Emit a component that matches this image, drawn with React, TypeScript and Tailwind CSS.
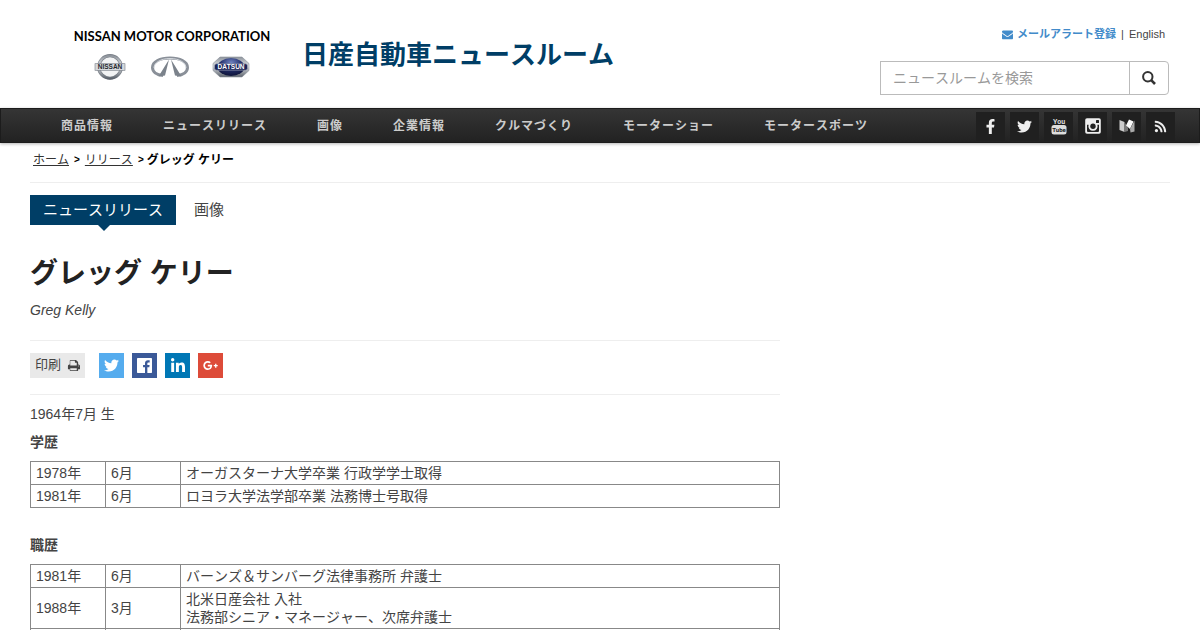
import type { ReactNode } from "react";
import { FaFacebookF, FaTwitter, FaLinkedinIn, FaRss, FaGooglePlusG } from "react-icons/fa";

const navItems = ["商品情報", "ニュースリリース", "画像", "企業情報", "クルマづくり", "モーターショー", "モータースポーツ"];

type Row = { year: string; month: string; lines: string[] };

const education: Row[] = [
  { year: "1978年", month: "6月", lines: ["オーガスターナ大学卒業 行政学学士取得"] },
  { year: "1981年", month: "6月", lines: ["ロヨラ大学法学部卒業 法務博士号取得"] },
];

const career: Row[] = [
  { year: "1981年", month: "6月", lines: ["バーンズ＆サンバーグ法律事務所 弁護士"] },
  { year: "1988年", month: "3月", lines: ["北米日産会社 入社", "法務部シニア・マネージャー、次席弁護士"] },
  { year: "", month: "", lines: [""] },
];

function EnvelopeIcon() {
  return (
    <svg viewBox="0 0 1792 1792" className="size-[11px] fill-current" aria-hidden="true">
      <path d="M1792 710v794q0 66-47 113t-113 47h-1472q-66 0-113-47t-47-113v-794q44 49 101 87 362 246 497 345 57 42 92.5 65.5t94.5 48 110 24.5h2q51 0 110-24.5t94.5-48 92.5-65.5q170-123 498-345 57-39 100-87zM1792 416q0 79-49 151t-122 123q-376 261-468 325-10 7-42.5 31t-54 38.5-52 32.5-57.5 27-50 9h-2q-23 0-50-9t-57.5-27-52-32.5-54-38.5-42.5-31q-91-64-262-182.5t-205-142.5q-62-42-117-115.5t-55-136.5q0-78 41.5-130t118.5-52h1472q65 0 112.5 47t47.5 113z" />
    </svg>
  );
}

function PrintIcon() {
  return (
    <svg viewBox="0 0 1792 1792" className="size-[13px] fill-current" aria-hidden="true">
      <path d="M448 1536h896v-256h-896v256zM448 896h896v-384h-160q-40 0-68-28t-28-68v-160h-640v640zM1664 960q0-26-19-45t-45-19-45 19-19 45 19 45 45 19 45-19 19-45zM1792 960v416q0 13-9.5 22.5t-22.5 9.5h-224v160q0 40-28 68t-68 28h-960q-40 0-68-28t-28-68v-160h-224q-13 0-22.5-9.5t-9.5-22.5v-416q0-79 56.5-135.5t135.5-56.5h64v-544q0-40 28-68t68-28h672q40 0 88 20t76 48l152 152q28 28 48 76t20 88v256h64q79 0 135.5 56.5t56.5 135.5z" />
    </svg>
  );
}

function FacebookTileIcon() {
  return (
    <svg viewBox="128 128 1536 1536" className="size-[15px] fill-current" aria-hidden="true">
      <path d="M1579 128q35 0 60 25t25 60v1366q0 35-25 60t-60 25h-391v-595h199l30-232h-229v-148q0-56 23.5-84t91.5-28l122-1v-207q-63-9-178-9-136 0-217.5 80t-81.5 226v171h-200v232h200v595h-735q-35 0-60-25t-25-60v-1366q0-35 25-60t60-25h1366z" />
    </svg>
  );
}

function SearchIcon() {
  return (
    <svg viewBox="0 0 14 14" className="size-[14px]" fill="none" stroke="#333" aria-hidden="true">
      <circle cx="5.8" cy="5.8" r="4.7" strokeWidth="2" />
      <path d="M9.2 9.2L13 13" strokeWidth="2.6" />
    </svg>
  );
}

function YoutubeIcon() {
  return (
    <svg viewBox="0 0 18 20" className="h-5 w-[18px]" aria-hidden="true">
      <text x="9" y="8" textAnchor="middle" fontSize="7" fontWeight="700" fontFamily="Roboto, sans-serif" fill="#ddd">You</text>
      <rect x="1.5" y="9" width="15" height="9.5" rx="2.5" fill="#ddd" />
      <text x="9" y="16" textAnchor="middle" fontSize="6" fontWeight="700" fontFamily="Roboto, sans-serif" fill="#222">Tube</text>
    </svg>
  );
}

function InstagramIcon() {
  return (
    <svg viewBox="0 0 16 16" className="size-4" aria-hidden="true">
      <rect x="0.2" y="0.2" width="15.6" height="15.6" rx="1.8" fill="#eee" />
      <path d="M2 6.8h1.6a4.6 4.6 0 1 0 8.8 0H14V13a1 1 0 0 1-1 1H3a1 1 0 0 1-1-1z" fill="#222" />
      <circle cx="8" cy="8.2" r="3.9" fill="#eee" />
      <circle cx="8" cy="8.2" r="2.7" fill="#222" />
      <rect x="11" y="2" width="3" height="3" rx="0.5" fill="#222" />
    </svg>
  );
}

function MediumIcon() {
  return (
    <svg viewBox="0 0 16 14" className="h-[14px] w-4" aria-hidden="true">
      <path d="M0.5 1L5.500 3v10L0.500 11z" fill="#ccc" />
      <path d="M5.500 3L9 9L9 12L5.500 13z" fill="#777" />
      <path d="M10 0.500L14.500 2.500L11 10L7 6.500z" fill="#fafafa" />
      <path d="M11 10L15.500 1.500V12.500L11.500 13.500z" fill="#aaa" />
    </svg>
  );
}

function BrandLogos() {
  return (
    <svg viewBox="0 0 160 28" className="h-7 w-40" aria-hidden="true">
      <defs>
        <linearGradient id="chrome" x1="0" y1="0" x2="0" y2="1">
          <stop offset="0" stopColor="#8d939b" />
          <stop offset="0.45" stopColor="#dfe2e6" />
          <stop offset="1" stopColor="#5d646d" />
        </linearGradient>
        <radialGradient id="navy" cx="0.5" cy="0.25" r="0.7">
          <stop offset="0" stopColor="#7083c0" />
          <stop offset="0.6" stopColor="#1f2a66" />
          <stop offset="1" stopColor="#11173f" />
        </radialGradient>
      </defs>
      <circle cx="18" cy="14" r="11.3" fill="#f2f3f4" stroke="#777d85" strokeWidth="3.2" />
      <circle cx="18" cy="14" r="11.3" fill="none" stroke="url(#chrome)" strokeWidth="2" />
      <rect x="3" y="10.7" width="30" height="6.6" fill="#d5d8dc" stroke="#777d85" strokeWidth="0.6" />
      <text x="18" y="16.3" textAnchor="middle" fontSize="6.5" fontWeight="700" fontFamily="Liberation Sans, sans-serif" fill="#25282d">NISSAN</text>
      <path d="M71 22.500C64 22 60.500 18.500 60.500 14.500C60.500 8.500 68 5 78 5S95.500 8.500 95.500 14.500C95.500 18.500 92 22 85 22.500" fill="none" stroke="#8a9099" strokeWidth="3" />
      <path d="M62 15C62 9.500 69 5.500 78 5.500S94 9.500 94 15" fill="none" stroke="#d4d8dd" strokeWidth="1" />
      <path d="M66.500 23.500L77 6.500L73 22.500zM89.500 23.500L79 6.500L83 22.500z" fill="#7b828b" />
      <path d="M128 4h22l7 6.500v7L150 24h-22l-7-6.500v-7z" fill="url(#chrome)" stroke="#8a909a" strokeWidth="0.6" />
      <ellipse cx="139" cy="14" rx="13.5" ry="9" fill="url(#navy)" />
      <rect x="122.500" y="10.800" width="33" height="6.400" rx="2" fill="#1b2358" stroke="#a9aebb" strokeWidth="0.6" />
      <text x="139" y="16.4" textAnchor="middle" fontSize="6.5" fontWeight="700" fontFamily="Liberation Sans, sans-serif" fill="#fff">DATSUN</text>
    </svg>
  );
}

const channels: { label: string; icon: ReactNode }[] = [
  { label: "Facebook", icon: <FaFacebookF className="size-[15px]" /> },
  { label: "Twitter", icon: <FaTwitter className="size-[15px]" /> },
  { label: "YouTube", icon: <YoutubeIcon /> },
  { label: "Instagram", icon: <InstagramIcon /> },
  { label: "Medium", icon: <MediumIcon /> },
  { label: "RSS", icon: <FaRss className="size-[13px]" /> },
];

function HistoryTable({ label, rows }: { label: string; rows: Row[] }) {
  return (
    <table aria-label={label} className="w-full table-fixed border-collapse leading-[18px]">
      <colgroup>
        <col className="w-[75px]" />
        <col className="w-[75px]" />
        <col />
      </colgroup>
      <tbody>
        {rows.map((row, i) => (
          <tr key={i}>
            <td className="border border-[#888] px-[5px] py-[2px]">{row.year}</td>
            <td className="border border-[#888] px-[5px] py-[2px]">{row.month}</td>
            <td className="border border-[#888] px-[5px] py-[2px]">
              {row.lines.map((line, j) => (
                <div key={j} className="min-h-[18px]">{line}</div>
              ))}
            </td>
          </tr>
        ))}
      </tbody>
    </table>
  );
}

export default function App() {
  return (
    <div className="bg-white font-['Liberation_Sans','Noto_Sans_CJK_JP',sans-serif] text-sm text-[#444] [font-kerning:none]">
      <header className="flex h-[108px] items-start justify-between pr-[31px] pl-[75px]">
        <div className="flex">
          <a href="#" className="flex w-[194px] flex-col items-center pt-[27px] text-black">
            <span className="font-[Lato,sans-serif] text-[13px] leading-[18px] font-bold whitespace-nowrap [font-kerning:normal]">NISSAN MOTOR CORPORATION</span>
            <span className="mt-2"><BrandLogos /></span>
          </a>
          <a href="#" className="ml-[33px] pt-9 text-[26px] leading-[38px] font-bold text-[#003e66]">日産自動車ニュースルーム</a>
        </div>
        <div className="flex flex-col items-end pt-[26px]">
          <div className="flex items-center gap-[5px] pr-1 text-[11px] leading-4">
            <a href="#" className="flex items-center gap-1 font-bold text-[#428bca]">
              <EnvelopeIcon />
              メールアラート登録
            </a>
            <span>|</span>
            <a href="#">English</a>
          </div>
          <form className="mt-[19px] flex h-[34px]" onSubmit={(e) => e.preventDefault()}>
            <input
              type="text"
              aria-label="ニュースルームを検索"
              placeholder="ニュースルームを検索"
              className="w-[250px] border border-[#bbb] px-3 placeholder:text-[#999]"
            />
            <button type="submit" aria-label="検索" className="-ml-px flex w-10 items-center justify-center rounded-r border border-[#bbb]">
              <SearchIcon />
            </button>
          </form>
        </div>
      </header>

      <nav className="flex h-[35px] items-center justify-between border border-[#1c1c1c] bg-linear-to-b from-[#353535] to-[#222] pt-px pr-6 pl-[60px] shadow-[0_1px_3px_rgba(0,0,0,0.3)]">
        <ul className="flex gap-[50px] text-xs font-bold tracking-[1px] text-[#ccc]">
          {navItems.map((item) => (
            <li key={item}><a href="#">{item}</a></li>
          ))}
        </ul>
        <ul className="flex gap-[5px] text-[#eee]">
          {channels.map((c) => (
            <li key={c.label}>
              <a href="#" aria-label={c.label} className="flex size-[29px] items-center justify-center bg-[#202020]">{c.icon}</a>
            </li>
          ))}
        </ul>
      </nav>

      <div className="px-[30px]">
        <div className="flex h-10 items-start gap-[5px] border-b border-[#eee] px-[3px] pt-2 text-xs leading-[18px] font-bold text-black">
          <a href="#" className="font-normal text-[#333] underline">ホーム</a>
          <span className="text-[10px]">&gt;</span>
          <a href="#" className="font-normal text-[#333] underline">リリース</a>
          <span className="text-[10px]">&gt;</span>
          <span className="-ml-[2px]">グレッグ ケリー</span>
        </div>

        <div className="mt-3 flex text-[15px] leading-[30px]">
          <a href="#" className="relative bg-[#003e66] px-[13px] text-white">
            ニュースリリース
            <span className="absolute top-full left-1/2 -ml-[5px] border-x-6 border-t-6 border-x-transparent border-t-[#003e66]" />
          </a>
          <a href="#" className="ml-[18px]">画像</a>
        </div>

        <main className="max-w-[750px]">
          <h1 className="mt-[29px] text-[28px] leading-10 font-bold text-[#222]">グレッグ ケリー</h1>
          <p className="mt-[6px] leading-5 italic">Greg Kelly</p>

          <div className="mt-5 flex h-[55px] items-start border-y border-[#eee] pt-3">
            <button type="button" className="mr-[14px] flex h-[25px] items-center gap-[6px] bg-[#e9e9e9] px-[5px] text-[13px]">
              印刷
              <PrintIcon />
            </button>
            <div className="flex gap-2 text-white">
              <a href="#" aria-label="Twitter" className="flex size-[25px] items-center justify-center bg-[#55acee]"><FaTwitter className="size-[15px]" /></a>
              <a href="#" aria-label="Facebook" className="flex size-[25px] items-center justify-center bg-[#3b5998]"><FacebookTileIcon /></a>
              <a href="#" aria-label="LinkedIn" className="flex size-[25px] items-center justify-center bg-[#0077b5]"><FaLinkedinIn className="size-4" /></a>
              <a href="#" aria-label="Google+" className="flex size-[25px] items-center justify-center bg-[#dd4b39]"><FaGooglePlusG className="size-[15px]" /></a>
            </div>
          </div>

          <p className="mt-[9px] leading-5">1964年7月 生</p>
          <h2 className="mt-2 mb-[9px] leading-5 font-bold">学歴</h2>
          <HistoryTable label="学歴" rows={education} />
          <h2 className="mt-[27px] mb-[9px] leading-5 font-bold">職歴</h2>
          <HistoryTable label="職歴" rows={career} />
        </main>
      </div>
    </div>
  );
}
